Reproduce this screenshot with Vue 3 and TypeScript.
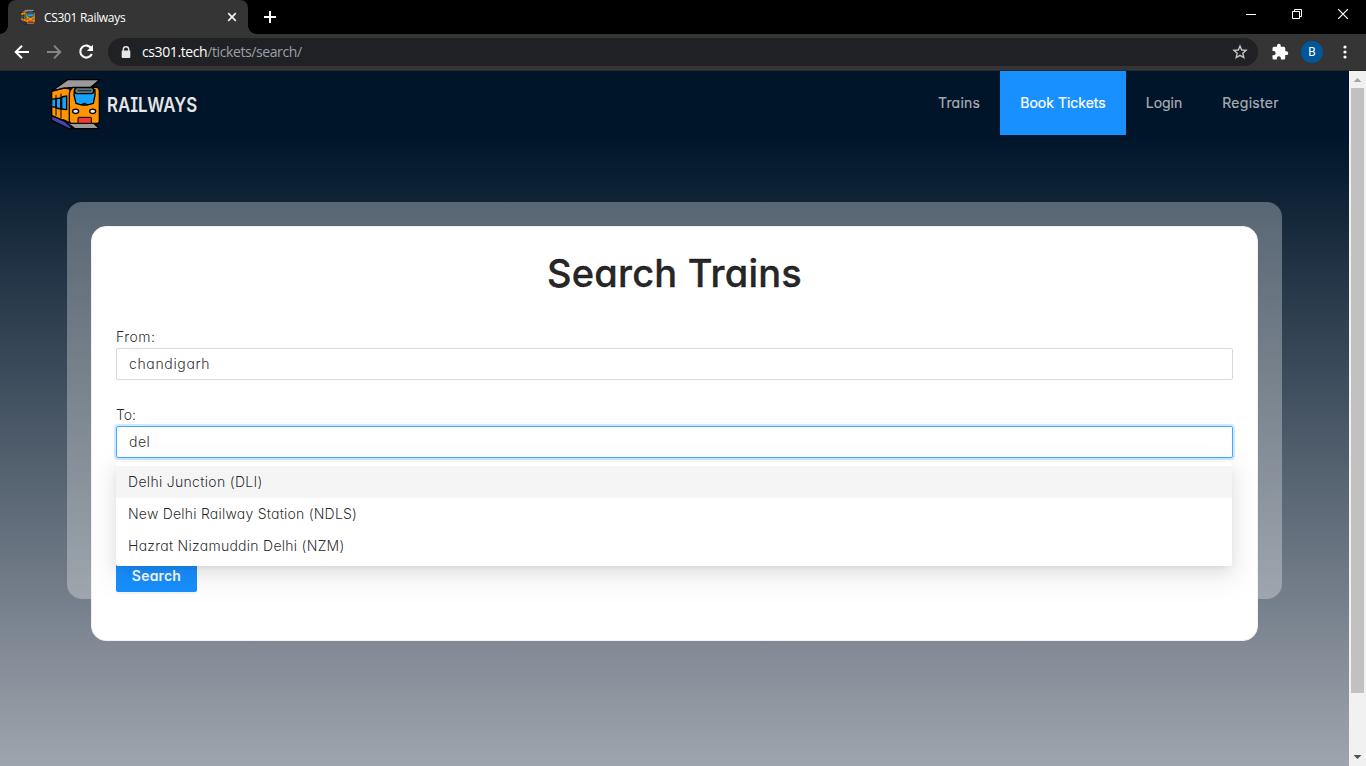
<script setup lang="ts">
import { ref } from 'vue'

interface NavItem {
  label: string
  cls: string
}

const nav: NavItem[] = [
  { label: 'Trains', cls: 'trains' },
  { label: 'Book Tickets', cls: 'book' },
  { label: 'Login', cls: 'login' },
  { label: 'Register', cls: 'register' },
]

const stations = [
  { label: 'Delhi Junction (DLI)', cls: 's1' },
  { label: 'New Delhi Railway Station (NDLS)', cls: 's2' },
  { label: 'Hazrat Nizamuddin Delhi (NZM)', cls: 's3' },
]

const from = ref('chandigarh')
const to = ref('del')
const highlighted = ref(0)
</script>

<template>
  <div class="window">
    <svg class="defs" width="0" height="0">
      <symbol id="train" viewBox="0 0 180 174">
        <g stroke="#000" stroke-width="4" stroke-linejoin="round">
          <path d="M20 48 68 14H164L136 38H72L58 41Z" fill="#9b9b9b" />
          <path d="M20 49 58 39 76 42V146L20 122Z" fill="#ff9500" />
          <path d="M20 73 32 71V97L20 95Z" fill="#12a4ff" />
          <path d="M34 71 47 69V102L34 99Z" fill="#12a4ff" />
          <path d="M50 66 65 63V104L50 102Z" fill="#12a4ff" />
          <path d="M33 60V122M48 56V130" fill="none" stroke-width="3" />
          <path d="M20 122 60 139 84 162H74L20 136Z" fill="#4046b5" />
          <path d="M54 134 78 145H146L164 161H90Z" fill="#9b9b9b" />
          <path d="M84 37H154Q163 38 163 50V138Q163 144 157 145H80Q73 144 73 138V56Q75 42 84 37Z" fill="#ff9500" />
          <path d="M88 44H150V60L145 85Q118 95 93 85L87 60Z" fill="#12a4ff" />
          <path d="M108 90Q118 78 128 90Z" fill="#0c2a40" stroke-width="2" />
          <rect x="89" y="38" width="57" height="18" rx="7" fill="#5c7680" />
          <path d="M98 47H138" stroke="#17242a" stroke-width="3" />
          <ellipse cx="92" cy="109" rx="9" ry="6.5" fill="#ececec" />
          <ellipse cx="143" cy="109" rx="9" ry="6.5" fill="#ececec" />
          <rect x="99" y="127" width="40" height="18" rx="2" fill="#f13b32" stroke-width="3" />
        </g>
      </symbol>
    </svg>

    <div class="tabstrip">
      <div class="tab">
        <svg class="favicon" viewBox="15 8 155 160"><use href="#train" width="180" height="174" /></svg>
        <span class="tab-title">CS301 Railways</span>
        <svg class="tab-close" width="10" height="10" viewBox="0 0 10 10"><path d="M1.2 1.2 8.8 8.8M8.8 1.2 1.2 8.8" stroke="#f1f1f1" stroke-width="1.7" /></svg>
      </div>
      <svg class="new-tab" width="12" height="12" viewBox="0 0 12 12"><path d="M6 0V12M0 6H12" stroke="#fff" stroke-width="2" /></svg>
      <div class="controls">
        <svg width="10" height="10" viewBox="0 0 10 10"><path d="M0 5.5H10" stroke="#fff" /></svg>
        <svg width="10" height="10" viewBox="0 0 10 10"><path d="M.5 2.5H7.500V9.500H.5ZM2.500 2.500V.5H9.500V7.500H7.500" fill="none" stroke="#fff" /></svg>
        <svg width="10" height="10" viewBox="0 0 10 10"><path d="M0 0 10 10M10 0 0 10" stroke="#fff" stroke-width="1.2" /></svg>
      </div>
    </div>

    <div class="toolbar">
      <svg class="back" width="16" height="16" viewBox="0 0 16 16"><path d="M15 8H2M8 1.700 1.700 8 8 14.300" fill="none" stroke="#fff" stroke-width="2" /></svg>
      <svg class="forward" width="16" height="16" viewBox="0 0 16 16"><path d="M1 8H14M8 1.700 14.300 8 8 14.300" fill="none" stroke="#868686" stroke-width="1.900" /></svg>
      <svg class="reload" width="16" height="16" viewBox="0 0 16 16"><path d="M13.300 4.200A6 6 0 1 0 13.800 10" fill="none" stroke="#fff" stroke-width="2.100" /><path d="M15 .8V7H8.800Z" fill="#fff" /></svg>
      <div class="omnibox">
        <svg class="lock" width="10" height="13" viewBox="0 0 10 13"><path d="M2.300 5V3.400a2.700 2.700 0 0 1 5.400 0V5" fill="none" stroke="#e6e6e6" stroke-width="1.400" /><rect x=".7" y="4.500" width="8.600" height="7.500" rx="1" fill="#e6e6e6" /></svg>
        <span class="url"><b>cs301.tech</b>/tickets/search/</span>
        <svg class="star" width="16" height="16" viewBox="0 0 16 16"><path d="M8 2 9.700 6 14.100 6.400 10.800 9.300 11.800 13.600 8 11.300 4.200 13.600 5.200 9.300 1.900 6.400 6.300 6Z" fill="none" stroke="#c5c5c5" stroke-width="1.400" /></svg>
      </div>
      <svg class="puzzle" width="18" height="18" viewBox="0 0 24 24"><path d="M20.500 11H19V7a2 2 0 0 0-2-2h-4V3.500a2.500 2.500 0 0 0-5 0V5H4a2 2 0 0 0-2 2v3.800h1.500a2.700 2.700 0 0 1 0 5.400H2V20a2 2 0 0 0 2 2h3.800v-1.500a2.700 2.700 0 0 1 5.400 0V22H17a2 2 0 0 0 2-2v-4h1.500a2.500 2.500 0 0 0 0-5Z" fill="#fff" /></svg>
      <div class="avatar">B</div>
      <svg class="dots" width="4" height="14" viewBox="0 0 4 14"><g fill="#fff"><circle cx="2" cy="2" r="1.600" /><circle cx="2" cy="7" r="1.600" /><circle cx="2" cy="12" r="1.600" /></g></svg>
    </div>

    <div class="viewport">
      <div class="page">
        <header class="header">
          <div class="brand">
            <svg class="logo" width="60" height="58"><use href="#train" /></svg>
            <span class="brand-name">RAILWAYS</span>
          </div>
          <nav class="nav">
            <a v-for="n in nav" :key="n.cls" class="nav-item" :class="n.cls"><span>{{ n.label }}</span></a>
          </nav>
        </header>
        <main class="panel">
          <section class="card">
            <h1><span>Search Trains</span></h1>
            <label class="l-from">From:</label>
            <div class="field v-from">{{ from }}</div>
            <label class="l-to">To:</label>
            <div class="field focused v-to">
              {{ to }}
              <ul class="dropdown">
                <li v-for="(s, i) in stations" :key="s.cls" :class="[s.cls, { on: i === highlighted }]">{{ s.label }}</li>
              </ul>
            </div>
            <button class="submit">Search</button>
          </section>
        </main>
      </div>
      <div class="scrollbar">
        <svg width="17" height="17" viewBox="0 0 17 17"><path d="M4.500 11 8.500 7 12.500 11Z" fill="#a3a3a3" /></svg>
        <div class="thumb"></div>
        <svg class="down" width="17" height="17" viewBox="0 0 17 17"><path d="M4.500 6H12.500L8.500 10Z" fill="#505050" /></svg>
      </div>
    </div>
  </div>
</template>

<style>
body { overflow: hidden; }
</style>

<style scoped>
* { box-sizing: border-box; }
svg { display: block; flex: none; }
.defs { position: absolute; }
.window { width: 1366px; height: 766px; display: flex; flex-direction: column; overflow: hidden; font-family: Inter, "Open Sans", sans-serif; font-feature-settings: "cv11"; white-space: nowrap; }
.tabstrip { height: 34px; background: #000; display: flex; padding-left: 8px; flex: none; font-family: "Open Sans", sans-serif; }
.tab { position: relative; width: 240px; height: 34px; background: #353535; border-radius: 8px 8px 0 0; display: flex; align-items: center; padding-left: 12px; }
.tab::before, .tab::after { content: ""; position: absolute; bottom: 0; width: 8px; height: 8px; }
.tab::before { left: -8px; background: radial-gradient(circle at 0 0, transparent 7.5px, #353535 8px); }
.tab::after { right: -8px; background: radial-gradient(circle at 100% 0, transparent 7.5px, #353535 8px); }
.favicon { width: 16px; height: 16px; }
.tab-title { margin-left: 8px; width: 183px; font-size: 12px; letter-spacing: -0.31px; color: #fff; }
.new-tab { margin: 11px 0 0 16px; }
.controls { margin: 9px 18px 0 auto; display: flex; gap: 36px; }
.toolbar { height: 37px; flex: none; background: #353535; border-bottom: 1px solid #282828; display: flex; align-items: center; padding-left: 14px; font-family: "Open Sans", sans-serif; }
.forward, .reload { margin-left: 16px; }
.omnibox { width: 1150px; height: 28px; border-radius: 14px; background: #202124; margin-left: 14px; display: flex; align-items: center; padding: 0 10px 0 13px; }
.url { margin-left: 11px; font-size: 14px; color: #9aa0a6; letter-spacing: -0.4px; line-height: 28px; }
.url b { font-weight: 400; color: #fff; }
.star { margin-left: auto; }
.puzzle { margin-left: 13px; }
.avatar { width: 22px; height: 22px; border-radius: 50%; background: #01579b; color: #fff; font: 12px/22px Roboto, sans-serif; text-align: center; margin-left: 12px; }
.dots { margin-left: 20px; }
.viewport { flex: 1; display: flex; min-height: 0; }
.page { width: 1349px; background: linear-gradient(#001529 64px, #9fa5ae 695px); }
.header { height: 64px; background: #001529; display: flex; justify-content: space-between; }
.brand { display: flex; align-items: center; padding-left: 45px; }
.logo { margin-top: 2px; }
.brand-name { margin-left: 2px; margin-top: 3px; font-size: 20px; font-weight: 600; color: #e5e5e5; font-feature-settings: "cv08"; transform: scaleX(.842); transform-origin: 0 50%; }
.nav { display: flex; padding-right: 50px; font-size: 14px; line-height: 64px; color: rgba(255, 255, 255, .65); -webkit-text-stroke: .15px currentColor; }
.nav-item { display: flex; justify-content: center; }
.trains { width: 82px; letter-spacing: 0.2px; }
.book { width: 126px; background: #1890ff; color: #fff; -webkit-text-stroke: .2px #fff; }
.login { width: 76px; }
.register { width: 97px; letter-spacing: 0.3px; }
.panel { width: 1215px; height: 397px; margin: 67px 0 0 67px; padding: 24px; border-radius: 15px; background: rgba(255, 255, 255, .3); }
.card { width: 1167px; height: 415px; padding: 23px 24px; background: #fff; border: 1px solid #f0f0f0; border-radius: 15px; color: rgba(0, 0, 0, .85); font-size: 14px; font-weight: 300; display: flex; flex-direction: column; }
h1 { margin: 0; height: 48px; line-height: 47px; font-size: 38px; font-weight: 500; text-align: center; letter-spacing: .2px; -webkit-text-stroke: .4px currentColor; }
label { height: 22px; line-height: 22px; margin-top: 28px; }
.l-from { letter-spacing: .5px; }
.l-to { margin-top: 24px; }
.field { position: relative; height: 32px; line-height: 30px; border: 1px solid #d9d9d9; border-radius: 2px; padding: 0 12px; }
.v-from { letter-spacing: .65px; }
.v-to { letter-spacing: .5px; }
.focused { border-color: #40a9ff; box-shadow: 0 0 0 2px rgba(24, 144, 255, .2); }
.dropdown { position: absolute; left: -1px; top: 35px; width: 1116px; margin: 0; padding: 4px 0; list-style: none; background: #fff; border-radius: 2px; box-shadow: 0 3px 6px -4px rgba(0, 0, 0, .12), 0 6px 16px rgba(0, 0, 0, .08), 0 9px 28px 8px rgba(0, 0, 0, .05); z-index: 2; }
li { height: 32px; line-height: 32px; padding: 0 12px; }
.s1 { letter-spacing: .31px; }
.s2 { letter-spacing: .22px; }
.s3 { letter-spacing: .27px; }
.on { background: #f5f5f5; }
.submit { margin-top: 102px; width: 81px; height: 32px; border: 0; border-radius: 2px; background: #1890ff; color: #fff; font: 600 14px/32px Inter, sans-serif; font-feature-settings: "cv11"; letter-spacing: .2px; padding: 0; box-shadow: 0 2px 0 rgba(0, 0, 0, .045); }
.scrollbar { width: 17px; background: #f1f1f1; display: flex; flex-direction: column; }
.thumb { width: 13px; height: 605px; margin-left: 2px; background: #c1c1c1; }
.down { margin-top: auto; }
</style>
